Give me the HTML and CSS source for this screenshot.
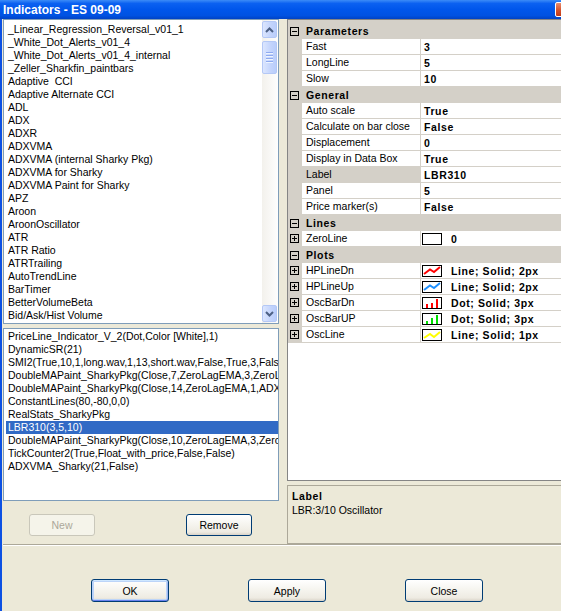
FILE: index.html
```
<!DOCTYPE html>
<html lang="en">

<head>
    <meta charset="UTF-8">
    <meta name="viewport" content="width=device-width, initial-scale=1">
    <title>Indicators - ES 09-09</title>
    <link rel="stylesheet" href="styles.css">
</head>

<body>
    <div class="window">
        <div class="titlebar">
            <span class="title">Indicators - ES 09-09</span>
            <span class="close-box"></span>
        </div>

        <div class="frame">
            <div class="main">
                <div class="left-col">
                    <!-- all indicators -->
                    <div class="listbox list-available">
                        <div class="list-items">
                            <div class="item">_Linear_Regression_Reversal_v01_1</div>
                            <div class="item">_White_Dot_Alerts_v01_4</div>
                            <div class="item">_White_Dot_Alerts_v01_4_internal</div>
                            <div class="item">_Zeller_Sharkfin_paintbars</div>
                            <div class="item">Adaptive  CCI</div>
                            <div class="item">Adaptive Alternate CCI</div>
                            <div class="item">ADL</div>
                            <div class="item">ADX</div>
                            <div class="item">ADXR</div>
                            <div class="item">ADXVMA</div>
                            <div class="item">ADXVMA (internal Sharky Pkg)</div>
                            <div class="item">ADXVMA for Sharky</div>
                            <div class="item">ADXVMA Paint for Sharky</div>
                            <div class="item">APZ</div>
                            <div class="item">Aroon</div>
                            <div class="item">AroonOscillator</div>
                            <div class="item">ATR</div>
                            <div class="item">ATR Ratio</div>
                            <div class="item">ATRTrailing</div>
                            <div class="item">AutoTrendLine</div>
                            <div class="item">BarTimer</div>
                            <div class="item">BetterVolumeBeta</div>
                            <div class="item">Bid/Ask/Hist Volume</div>
                        </div>
                        <div class="scrollbar">
                            <div class="scroll-btn">
                                <svg width="9" height="6" viewBox="0 0 9 6"><path d="M1 5L4.5 1.5L8 5" fill="none" stroke="#4d6185" stroke-width="2"/></svg>
                            </div>
                            <div class="scroll-thumb">
                                <span class="grip"></span>
                                <span class="grip"></span>
                                <span class="grip"></span>
                                <span class="grip"></span>
                            </div>
                            <div class="scroll-space"></div>
                            <div class="scroll-btn">
                                <svg width="9" height="6" viewBox="0 0 9 6"><path d="M1 1L4.5 4.5L8 1" fill="none" stroke="#4d6185" stroke-width="2"/></svg>
                            </div>
                        </div>
                    </div>

                    <!-- indicators on chart -->
                    <div class="listbox list-added">
                        <div class="list-items">
                            <div class="item">PriceLine_Indicator_V_2(Dot,Color [White],1)</div>
                            <div class="item">DynamicSR(21)</div>
                            <div class="item">SMI2(True,10,1,long.wav,1,13,short.wav,False,True,3,False)</div>
                            <div class="item">DoubleMAPaint_SharkyPkg(Close,7,ZeroLagEMA,3,ZeroLagEMA)</div>
                            <div class="item">DoubleMAPaint_SharkyPkg(Close,14,ZeroLagEMA,1,ADXVMA)</div>
                            <div class="item">ConstantLines(80,-80,0,0)</div>
                            <div class="item">RealStats_SharkyPkg</div>
                            <div class="item selected">LBR310(3,5,10)</div>
                            <div class="item">DoubleMAPaint_SharkyPkg(Close,10,ZeroLagEMA,3,ZeroLagEMA)</div>
                            <div class="item">TickCounter2(True,Float_with_price,False,False)</div>
                            <div class="item">ADXVMA_Sharky(21,False)</div>
                        </div>
                    </div>

                    <div class="list-buttons">
                        <button class="btn btn-small" disabled>New</button>
                        <button class="btn btn-small">Remove</button>
                    </div>
                </div>

                <div class="right-col">
                    <div class="propgrid">
                        <div class="grid-top"></div>

                        <div class="category">
                            <span class="margin"><svg class="toggle" width="9" height="9"><rect x="0.5" y="0.5" width="8" height="8" fill="none" stroke="#000"/><path d="M2 4.5H7" stroke="#000"/></svg></span>
                            <span class="cat-name">Parameters</span>
                        </div>
                        <div class="prop"><span class="margin"></span><span class="name">Fast</span><span class="value">3</span></div>
                        <div class="prop"><span class="margin"></span><span class="name">LongLine</span><span class="value">5</span></div>
                        <div class="prop"><span class="margin"></span><span class="name">Slow</span><span class="value">10</span></div>

                        <div class="category">
                            <span class="margin"><svg class="toggle" width="9" height="9"><rect x="0.5" y="0.5" width="8" height="8" fill="none" stroke="#000"/><path d="M2 4.5H7" stroke="#000"/></svg></span>
                            <span class="cat-name">General</span>
                        </div>
                        <div class="prop"><span class="margin"></span><span class="name">Auto scale</span><span class="value">True</span></div>
                        <div class="prop"><span class="margin"></span><span class="name">Calculate on bar close</span><span class="value">False</span></div>
                        <div class="prop"><span class="margin"></span><span class="name">Displacement</span><span class="value">0</span></div>
                        <div class="prop"><span class="margin"></span><span class="name">Display in Data Box</span><span class="value">True</span></div>
                        <div class="prop"><span class="margin"></span><span class="name selected">Label</span><span class="value">LBR310</span></div>
                        <div class="prop"><span class="margin"></span><span class="name">Panel</span><span class="value">5</span></div>
                        <div class="prop"><span class="margin"></span><span class="name">Price marker(s)</span><span class="value">False</span></div>

                        <div class="category">
                            <span class="margin"><svg class="toggle" width="9" height="9"><rect x="0.5" y="0.5" width="8" height="8" fill="none" stroke="#000"/><path d="M2 4.5H7" stroke="#000"/></svg></span>
                            <span class="cat-name">Lines</span>
                        </div>
                        <div class="prop">
                            <span class="margin"><svg class="toggle" width="9" height="9"><rect x="0.5" y="0.5" width="8" height="8" fill="none" stroke="#000"/><path d="M2 4.5H7M4.5 2V7" stroke="#000"/></svg></span>
                            <span class="name">ZeroLine</span>
                            <span class="value"><span class="swatch"></span>0</span>
                        </div>

                        <div class="category">
                            <span class="margin"><svg class="toggle" width="9" height="9"><rect x="0.5" y="0.5" width="8" height="8" fill="none" stroke="#000"/><path d="M2 4.5H7" stroke="#000"/></svg></span>
                            <span class="cat-name">Plots</span>
                        </div>
                        <div class="prop">
                            <span class="margin"><svg class="toggle" width="9" height="9"><rect x="0.5" y="0.5" width="8" height="8" fill="none" stroke="#000"/><path d="M2 4.5H7M4.5 2V7" stroke="#000"/></svg></span>
                            <span class="name">HPLineDn</span>
                            <span class="value"><span class="swatch"><svg width="18" height="10"><polyline points="1,8 7,3.5 11,6 17,1" fill="none" stroke="#ff0000" stroke-width="2"/></svg></span>Line; Solid; 2px</span>
                        </div>
                        <div class="prop">
                            <span class="margin"><svg class="toggle" width="9" height="9"><rect x="0.5" y="0.5" width="8" height="8" fill="none" stroke="#000"/><path d="M2 4.5H7M4.5 2V7" stroke="#000"/></svg></span>
                            <span class="name">HPLineUp</span>
                            <span class="value"><span class="swatch"><svg width="18" height="10"><polyline points="1,8 7,3.5 11,6 17,1" fill="none" stroke="#1e90ff" stroke-width="2"/></svg></span>Line; Solid; 2px</span>
                        </div>
                        <div class="prop">
                            <span class="margin"><svg class="toggle" width="9" height="9"><rect x="0.5" y="0.5" width="8" height="8" fill="none" stroke="#000"/><path d="M2 4.5H7M4.5 2V7" stroke="#000"/></svg></span>
                            <span class="name">OscBarDn</span>
                            <span class="value"><span class="swatch"><svg width="18" height="10"><rect x="3" y="6" width="2" height="4" fill="#ff0000"/><rect x="8" y="5" width="2" height="5" fill="#ff0000"/><rect x="13" y="1" width="2" height="9" fill="#ff0000"/></svg></span>Dot; Solid; 3px</span>
                        </div>
                        <div class="prop">
                            <span class="margin"><svg class="toggle" width="9" height="9"><rect x="0.5" y="0.5" width="8" height="8" fill="none" stroke="#000"/><path d="M2 4.5H7M4.5 2V7" stroke="#000"/></svg></span>
                            <span class="name">OscBarUP</span>
                            <span class="value"><span class="swatch"><svg width="18" height="10"><rect x="3" y="7" width="2" height="3" fill="#00e000"/><rect x="8" y="4" width="2" height="6" fill="#00e000"/><rect x="13" y="1" width="2" height="9" fill="#00e000"/></svg></span>Dot; Solid; 3px</span>
                        </div>
                        <div class="prop">
                            <span class="margin"><svg class="toggle" width="9" height="9"><rect x="0.5" y="0.5" width="8" height="8" fill="none" stroke="#000"/><path d="M2 4.5H7M4.5 2V7" stroke="#000"/></svg></span>
                            <span class="name">OscLine</span>
                            <span class="value"><span class="swatch"><svg width="18" height="10"><polyline points="1,8 7,4 11,7 17,2" fill="none" stroke="#ffff00" stroke-width="2"/></svg></span>Line; Solid; 1px</span>
                        </div>
                    </div>

                    <div class="description">
                        <div class="desc-title">Label</div>
                        <div class="desc-text">LBR:3/10 Oscillator</div>
                    </div>
                </div>
            </div>

            <div class="separator"></div>

            <div class="dialog-buttons">
                <button class="btn btn-dialog btn-default">OK</button>
                <button class="btn btn-dialog">Apply</button>
                <button class="btn btn-dialog">Close</button>
            </div>
        </div>
    </div>
</body>

</html>
```

FILE: styles.css
```
body {
    margin: 0;
    width: 561px;
    height: 611px;
    overflow: hidden;
    background-color: #ece9d8;
    font-family: "Liberation Sans", Arial, sans-serif;
    font-size: 10.5px;
    color: #000;
}

.window {
    width: 583px;
    height: 611px;
    display: flex;
    flex-direction: column;
}

/* title bar */
.titlebar {
    height: 19px;
    flex: none;
    display: flex;
    align-items: center;
    justify-content: space-between;
    padding-left: 3px;
    background: linear-gradient(#3c8cf7 0%, #0b61f1 18%, #0056eb 50%, #0052e2 82%, #0042c4 100%);
    color: #fff;
}

.title {
    font-weight: bold;
    font-size: 12px;
}

.close-box {
    width: 13px;
    height: 13px;
    margin-right: 13px;
    border: 1px solid #fff;
    border-radius: 2px;
    background: linear-gradient(#ea8c6e, #d5532d 55%, #c23a17);
}

.frame {
    flex: 1;
    display: flex;
    flex-direction: column;
    border-left: 2px solid #0d51e3;
    border-right: 3px solid #0d51e3;
    padding: 0 1px;
}

.main {
    height: 525px;
    flex: none;
    display: flex;
    gap: 8px;
}

/* left side lists */
.left-col {
    width: 276px;
    flex: none;
    display: flex;
    flex-direction: column;
}

.listbox {
    box-sizing: border-box;
    display: flex;
    background-color: #fff;
    border: 1px solid #7f9db9;
    overflow: hidden;
}

.list-available {
    height: 305px;
}

.list-added {
    height: 173px;
    margin-top: 4px;
}

.list-items {
    flex: 1;
    min-width: 0;
    padding: 3px 0 0 2px;
    overflow: hidden;
}

.list-added .list-items {
    padding-top: 1px;
}

.item {
    height: 13px;
    line-height: 13px;
    padding-left: 2px;
    white-space: pre;
    overflow: hidden;
}

.item.selected {
    background-color: #316ac5;
    color: #fff;
}

.scrollbar {
    width: 16px;
    flex: none;
    display: flex;
    flex-direction: column;
    padding: 1px 1px 1px 0;
    box-sizing: border-box;
    background: linear-gradient(to right, #f3f1ec, #fefefe);
}

.scroll-btn,
.scroll-thumb {
    box-sizing: border-box;
    border: 1px solid #b4c8f6;
    border-radius: 2px;
    background: linear-gradient(to right, #dce6fe, #c3d4fc 60%, #b9cdfb);
    display: flex;
    flex-direction: column;
    align-items: center;
    justify-content: center;
}

.scroll-btn {
    height: 17px;
}

.scroll-thumb {
    height: 33px;
    margin-top: 3px;
    gap: 1px;
}

.grip {
    width: 7px;
    height: 1px;
    background-color: #8eaaf0;
    border-bottom: 1px solid #eef4fe;
}

.scroll-space {
    flex: 1;
}

.list-buttons {
    display: flex;
    gap: 91px;
    margin-top: 13px;
    padding-left: 26px;
}

/* buttons */
.btn {
    box-sizing: border-box;
    padding: 0;
    border: 1px solid #003c74;
    border-radius: 3px;
    background: linear-gradient(#ffffff 0%, #f7f6f1 40%, #eeebe2 85%, #d9d3c8 100%);
    font-family: "Liberation Sans", Arial, sans-serif;
    font-size: 10.5px;
    color: #000;
}

.btn-small {
    width: 66px;
    height: 22px;
}

.btn:disabled {
    border-color: #c9c7ba;
    background: #f5f4ea;
    color: #aca899;
}

.btn-dialog {
    width: 78px;
    height: 23px;
}

.btn-default {
    box-shadow: inset 0 1px 0 #cee7ff, inset 0 -1px 0 #6982ee, inset 1px 0 0 #b8d0f8, inset -1px 0 0 #9cb6f0, inset 0 0 0 2px #bcd4f8;
}

/* property grid */
.right-col {
    flex: 1;
    min-width: 0;
    display: flex;
    flex-direction: column;
}

.propgrid {
    height: 462px;
    box-sizing: border-box;
    border: 1px solid #858585;
    background-color: #fff;
    overflow: hidden;
}

.grid-top {
    height: 3px;
    background-color: #d4d0c8;
}

.category,
.prop {
    height: 16px;
    display: flex;
}

.category {
    background-color: #d4d0c8;
}

.margin {
    width: 14px;
    flex: none;
    box-sizing: border-box;
    padding-left: 2px;
    display: flex;
    align-items: center;
    background-color: #d4d0c8;
}

.prop .margin {
    padding-bottom: 1px;
}

.cat-name {
    padding-left: 4px;
    line-height: 16px;
    font-weight: bold;
    letter-spacing: 0.6px;
}

.name {
    width: 119px;
    flex: none;
    box-sizing: border-box;
    padding-left: 4px;
    line-height: 15px;
    border-right: 1px solid #d4d0c8;
    border-bottom: 1px solid #d4d0c8;
    white-space: nowrap;
    overflow: hidden;
}

.name.selected {
    background-color: #d4d0c8;
}

.value {
    flex: 1;
    display: flex;
    align-items: center;
    padding-left: 1px;
    border-bottom: 1px solid #d4d0c8;
    font-weight: bold;
    letter-spacing: 0.6px;
    white-space: nowrap;
}

.prop .value {
    text-indent: 2px;
}

.swatch {
    width: 20px;
    height: 12px;
    flex: none;
    box-sizing: border-box;
    margin-right: 7px;
    border: 1px solid #000;
    background-color: #fff;
    text-indent: 0;
}

.swatch svg {
    display: block;
}

.description {
    height: 59px;
    margin-top: 4px;
    box-sizing: border-box;
    padding: 3px 4px;
    border: 1px solid #aca899;
}

.desc-title {
    font-weight: bold;
    letter-spacing: 0.6px;
    line-height: 14px;
}

.desc-text {
    line-height: 14px;
}

/* bottom */
.separator {
    border-top: 1px solid #aca899;
    border-bottom: 1px solid #fff;
}

.dialog-buttons {
    display: flex;
    gap: 79px;
    padding: 33px 0 0 88px;
}
```
